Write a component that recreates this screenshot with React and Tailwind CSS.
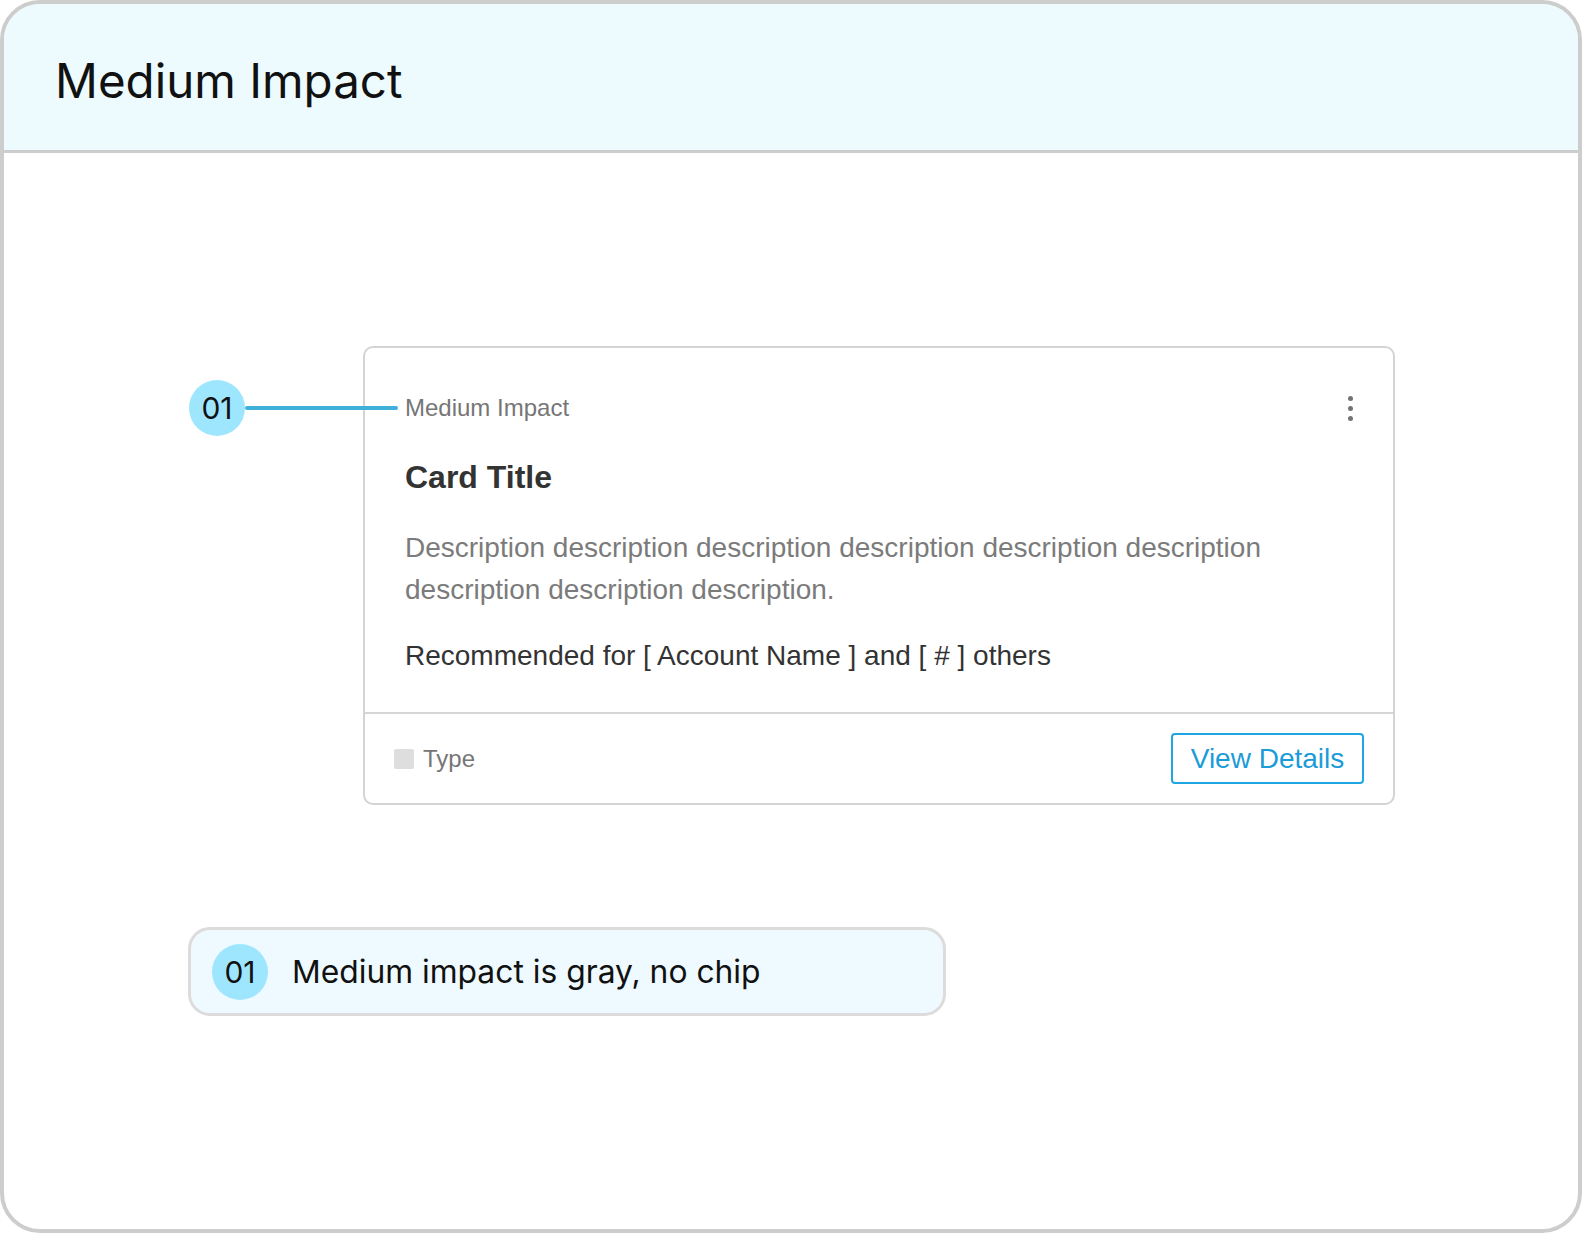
const inter = "font-['Inter','Noto_Sans',sans-serif]";
const arial = "font-['Liberation_Sans','Arial',sans-serif]";

function Marker({ label }) {
  return (
    <div
      className={`flex h-[56px] w-[56px] shrink-0 items-center justify-center rounded-full bg-[#9ee6fd] text-[30px] leading-none text-[#111] ${inter}`}
    >
      {label}
    </div>
  );
}

function RecommendationCard() {
  return (
    <div className="relative w-[1032px] rounded-[10px] border-2 border-[#d4d4d4] bg-white">
      {/* callout pointing at the impact label */}
      <div className="absolute left-[-176px] top-[32px] z-10 flex items-center">
        <Marker label="01" />
        <div className="h-[4px] w-[153px] rounded-full bg-[#3eb0da]" />
      </div>

      <div className={`px-[40px] pb-[35px] pt-[46px] ${arial}`}>
        <div className="flex h-[28px] items-center justify-between">
          <span className="text-[24px] leading-[28px] text-[#767676]">Medium Impact</span>
          <div className="flex flex-col gap-[5px]">
            <span className="h-[5px] w-[5px] rounded-full bg-[#737373]" />
            <span className="h-[5px] w-[5px] rounded-full bg-[#737373]" />
            <span className="h-[5px] w-[5px] rounded-full bg-[#737373]" />
          </div>
        </div>
        <h3 className="mt-[36px] text-[32px] font-bold leading-[38px] text-[#333]">Card Title</h3>
        <p className="mt-[31px] max-w-[880px] text-[28px] leading-[42px] text-[#7b7b7b]">
          Description description description description description description description description
          description.
        </p>
        <p className="mt-[24px] text-[28px] leading-[42px] text-[#333]">
          Recommended for [ Account Name ] and [ # ] others
        </p>
      </div>

      <div className={`flex items-center justify-between border-t-2 border-[#d6d6d6] px-[29px] py-[19px] ${arial}`}>
        <div className="flex items-center gap-[9px]">
          <span className="h-[20px] w-[20px] rounded-[2px] bg-[#dedede]" />
          <span className="text-[24px] leading-[28px] text-[#767676]">Type</span>
        </div>
        <button className="h-[51px] w-[193px] rounded-[4px] border-2 border-[#1ea6e2] text-[28px] leading-none text-[#1b9cd8]">
          View Details
        </button>
      </div>
    </div>
  );
}

export default function App() {
  return (
    <div className="h-[1233px] w-[1582px] overflow-hidden rounded-[40px] border-4 border-[#cdcdcd] bg-white">
      <header className="h-[149px] border-b-[3px] border-[#cdcdcd] bg-[#edfbff] pl-[51px] pt-[48px]">
        <h1 className={`text-[47.5px] leading-[58px] text-[#111] ${inter}`}>Medium Impact</h1>
      </header>

      <main className="pl-[184px]">
        <div className="ml-[175px] mt-[193px]">
          <RecommendationCard />
        </div>

        <div className="mt-[122px] flex h-[89px] w-[758px] items-center gap-[24px] rounded-[22px] border-[3px] border-[#dcdcdc] bg-[#eefaff] pl-[21px]">
          <Marker label="01" />
          <span className={`text-[31.8px] leading-none text-[#111] ${inter}`}>
            Medium impact is gray, no chip
          </span>
        </div>
      </main>
    </div>
  );
}
